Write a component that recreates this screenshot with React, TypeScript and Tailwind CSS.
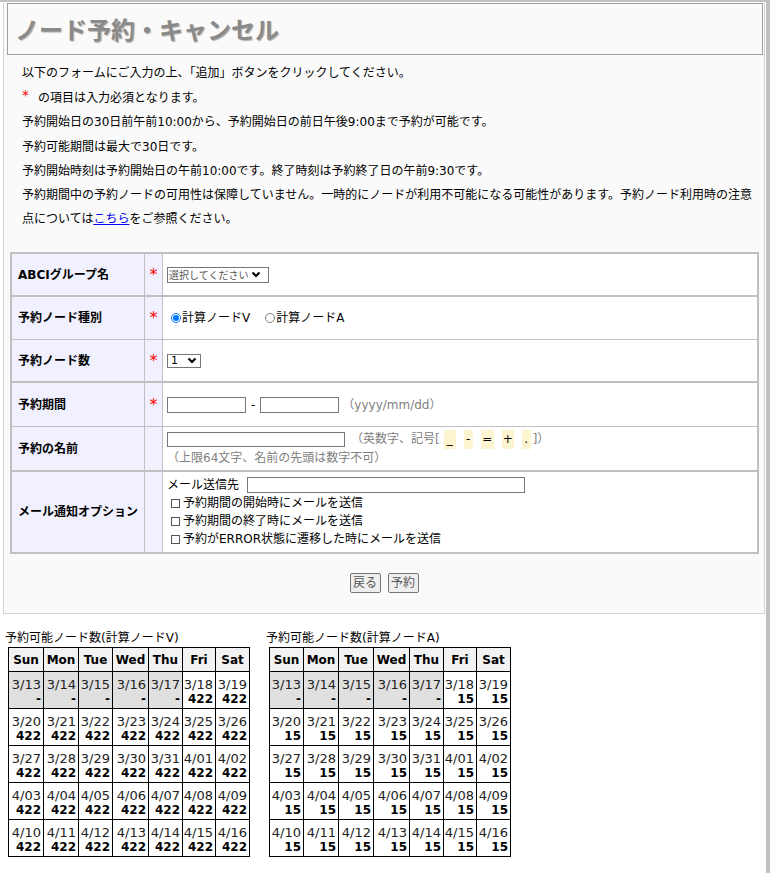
import React from 'react';

const weekDays = ['Sun', 'Mon', 'Tue', 'Wed', 'Thu', 'Fri', 'Sat'];

const weeks: string[][] = [
  ['3/13', '3/14', '3/15', '3/16', '3/17', '3/18', '3/19'],
  ['3/20', '3/21', '3/22', '3/23', '3/24', '3/25', '3/26'],
  ['3/27', '3/28', '3/29', '3/30', '3/31', '4/01', '4/02'],
  ['4/03', '4/04', '4/05', '4/06', '4/07', '4/08', '4/09'],
  ['4/10', '4/11', '4/12', '4/13', '4/14', '4/15', '4/16'],
];

function Chevron() {
  return (
    <svg width="10" height="7" viewBox="0 0 10 7" className="shrink-0">
      <path d="M1.5 1.5l3.5 3.5 3.5-3.5" stroke="#000" strokeWidth="2.2" fill="none" />
    </svg>
  );
}

function Star() {
  return <span className="text-[16px] leading-[16px] text-[#ff0000]">*</span>;
}

interface RowProps {
  label: string;
  required?: boolean;
  height: string;
  border: string;
  children: React.ReactNode;
}

function FormRow({ label, required, height, border, children }: RowProps) {
  return (
    <div className={`flex ${height} ${border} border-[#c0c0c0]`}>
      <div className="flex w-[133px] items-center border-r border-[#c0c0c0] bg-[#f0f0ff] pl-[6px] font-bold">
        {label}
      </div>
      <div className="flex w-[18px] items-center justify-center border-r border-[#c0c0c0] bg-[#f0f0ff]">
        {required && <Star />}
      </div>
      <div className="flex flex-1 flex-col justify-center bg-white pl-[4px]">{children}</div>
    </div>
  );
}

function Radio({ checked }: { checked?: boolean }) {
  return checked ? (
    <span className="flex h-[10px] w-[10px] shrink-0 items-center justify-center rounded-full border border-[#0075ff] bg-white">
      <span className="block h-[6px] w-[6px] rounded-full bg-[#0075ff]" />
    </span>
  ) : (
    <span className="block h-[10px] w-[10px] shrink-0 rounded-full border border-[#808080] bg-white" />
  );
}

function Check({ label }: { label: string }) {
  return (
    <div className="flex h-[18px] items-center">
      <span className="ml-[4px] mr-[3px] block h-[9px] w-[9px] border border-[#555] bg-white" />
      {label}
    </div>
  );
}

function Calendar({ title, count, cols }: { title: string; count: string; cols: number[] }) {
  return (
    <div>
      <div className="h-[16px] leading-[16px]">{title}</div>
      <table className="ml-[3px] mt-[1px] table-fixed border-collapse font-['DejaVu_Sans',sans-serif] text-[13px]">
        <colgroup>
          {cols.map((w, i) => (
            <col key={i} style={{ width: w }} />
          ))}
        </colgroup>
        <thead>
          <tr className="h-[24px]">
            {weekDays.map((d) => (
              <th key={d} className="border border-black bg-[#f2f2f2] p-0 text-center text-[12px] font-bold">
                {d}
              </th>
            ))}
          </tr>
        </thead>
        <tbody>
          {weeks.map((week, wi) => (
            <tr key={wi} className="h-[37px]">
              {week.map((day, di) => {
                const past = wi === 0 && di < 5;
                return (
                  <td
                    key={day}
                    className={`border border-black p-0 pr-[2px] pt-[6px] text-right align-top leading-[14px] ${past ? 'bg-[#e0e0e0]' : 'bg-white'}`}
                  >
                    <div className="text-[#222]">{day}</div>
                    <div className="text-[12px] font-bold">{past ? '-' : count}</div>
                  </td>
                );
              })}
            </tr>
          ))}
        </tbody>
      </table>
    </div>
  );
}

export default function App() {
  const sym = ['_', '-', '=', '+', '.'];
  const symW = ['w-[12px]', 'w-[9px]', 'w-[13px]', 'w-[12px]', 'w-[9px]'];

  return (
    <div className="min-h-[873px] border-t-2 border-r-4 border-[#c0c0c0] bg-white font-['DejaVu_Sans','Noto_Sans_CJK_JP',sans-serif] text-[12px] text-black">
      <div className="ml-[3px] w-[762px] border-x border-b border-[#d4d4d4] bg-[#fafafa] pb-[20px]">
        <div className="ml-[3px] mt-[1px] flex h-[52px] w-[756px] items-center border border-[#a0a0a0] pl-[7px]">
          <h1 className="font-['Noto_Sans_CJK_JP',sans-serif] text-[24px] font-bold text-[#8a8a8a] [text-shadow:1px_1px_1px_#b0b0b0]">
            ノード予約・キャンセル
          </h1>
        </div>

        <div className="mt-[6px] pl-[18px] leading-[24.2px]">
          <p>以下のフォームにご入力の上、「追加」ボタンをクリックしてください。</p>
          <p>
            <span className="relative -top-[2px] text-[14px] text-[#ff0000]">*</span>
            <span className="ml-[9px]">の項目は入力必須となります。</span>
          </p>
          <p>予約開始日の30日前午前10:00から、予約開始日の前日午後9:00まで予約が可能です。</p>
          <p>予約可能期間は最大で30日です。</p>
          <p>予約開始時刻は予約開始日の午前10:00です。終了時刻は予約終了日の午前9:30です。</p>
          <p>
            予約期間中の予約ノードの可用性は保障していません。一時的にノードが利用不可能になる可能性があります。予約ノード利用時の注意
            <br />
            点については
            <a href="#" className="text-[#0000ee] underline">
              こちら
            </a>
            をご参照ください。
          </p>
        </div>

        <div className="ml-[6px] mt-[21px] w-[749px] border-2 border-[#c0c0c0] bg-white">
          <FormRow label="ABCIグループ名" required height="h-[43px]" border="border-b-2">
            <div className="flex h-[16px] w-[102px] items-center gap-[3px] whitespace-nowrap border border-[#767676] bg-white pl-[1px] text-[10px] text-[#555]">
              <span className="font-['Noto_Sans_CJK_JP',sans-serif]">選択してください</span>
              <Chevron />
            </div>
          </FormRow>
          <FormRow label="予約ノード種別" required height="h-[43px]" border="border-b">
            <div className="flex items-center pl-[4px]">
              <Radio checked />
              <span className="ml-[1px]">計算ノードV</span>
              <span className="ml-[15px]">
                <Radio />
              </span>
              <span className="ml-[1px]">計算ノードA</span>
            </div>
          </FormRow>
          <FormRow label="予約ノード数" required height="h-[43px]" border="border-b-2">
            <div className="flex h-[14px] w-[34px] items-center justify-between border border-[#767676] bg-white pl-[3px] pr-[3px] text-[11px]">
              <span>1</span>
              <Chevron />
            </div>
          </FormRow>
          <FormRow label="予約期間" required height="h-[44px]" border="border-b">
            <div className="flex items-center">
              <span className="h-[16px] w-[79px] border border-[#767676] bg-white" />
              <span className="mx-[5px]">-</span>
              <span className="h-[16px] w-[79px] border border-[#767676] bg-white" />
              <span className="ml-[3px] text-[#808080]">（yyyy/mm/dd）</span>
            </div>
          </FormRow>
          <FormRow label="予約の名前" height="h-[45px]" border="border-b-2">
            <div className="flex h-[19px] items-center">
              <span className="h-[15px] w-[178px] border border-[#767676] bg-white" />
              <span className="ml-[6px] text-[#808080]">（英数字、記号[</span>
              {sym.map((s, i) => (
                <span
                  key={s}
                  className={`${symW[i]} ${i === 0 ? 'ml-[4px]' : 'ml-[8px]'} h-[19px] bg-[#fdf5cf] text-center leading-[19px] text-black`}
                >
                  {s}
                </span>
              ))}
              <span className="ml-[2px] text-[#808080]">]）</span>
            </div>
            <div className="h-[19px] leading-[19px] text-[#808080]">（上限64文字、名前の先頭は数字不可）</div>
          </FormRow>
          <FormRow label="メール通知オプション" height="h-[80px]" border="">
            <div className="flex h-[18px] items-center">
              <span>メール送信先</span>
              <span className="ml-[8px] h-[16px] w-[278px] border border-[#767676] bg-white" />
            </div>
            <Check label="予約期間の開始時にメールを送信" />
            <Check label="予約期間の終了時にメールを送信" />
            <Check label="予約がERROR状態に遷移した時にメールを送信" />
          </FormRow>
        </div>

        <div className="mt-[19px] flex justify-center gap-[7px]">
          <button className="h-[20px] w-[31px] rounded-[2px] border border-[#767676] bg-[#efefef] text-[12px] text-[#555]">
            戻る
          </button>
          <button className="h-[20px] w-[31px] rounded-[2px] border border-[#767676] bg-[#efefef] text-[12px] text-[#555]">
            予約
          </button>
        </div>
      </div>

      <div className="flex gap-[16px] pl-[5px] pt-[16px]">
        <Calendar title="予約可能ノード数(計算ノードV)" count="422" cols={[35, 35, 34, 36, 34, 33, 34]} />
        <Calendar title="予約可能ノード数(計算ノードA)" count="15" cols={[34, 35, 35, 36, 34, 33, 34]} />
      </div>
    </div>
  );
}
